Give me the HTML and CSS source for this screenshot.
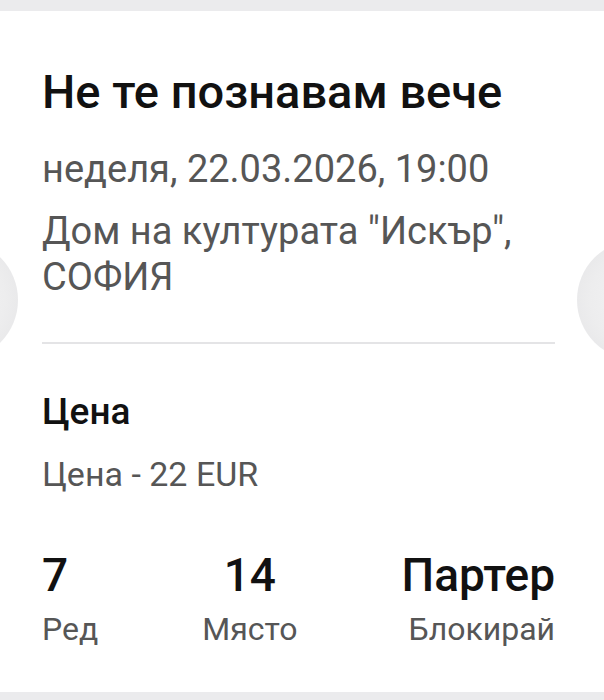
FILE: index.html
```html
<!DOCTYPE html>
<html lang="bg">
<head><meta charset="utf-8"><title>Билет</title><link rel="stylesheet" href="styles.css"></head>
<body>
<main class="page">
  <section class="ticket">
    <span class="notch notch-left"></span>
    <span class="notch notch-right"></span>
    <div class="ticket-head">
      <h1 class="title">Не те познавам вече</h1>
      <p class="meta date">неделя, 22.03.2026, 19:00</p>
      <p class="meta venue">Дом на културата "Искър", СОФИЯ</p>
    </div>
    <hr class="divider">
    <div class="price">
      <h2 class="price-title">Цена</h2>
      <p class="price-text">Цена - 22 EUR</p>
    </div>
    <div class="seats">
      <div class="seat seat-start">
        <span class="seat-value">7</span>
        <span class="seat-label">Ред</span>
      </div>
      <div class="seat seat-center">
        <span class="seat-value">14</span>
        <span class="seat-label">Място</span>
      </div>
      <div class="seat seat-end">
        <span class="seat-value">Партер</span>
        <span class="seat-label">Блокирай</span>
      </div>
    </div>
  </section>
</main>
</body>
</html>
```
FILE: styles.css
```css
* { box-sizing: border-box; }
html, body { margin: 0; padding: 0; }
body {
  background: #ebebed;
  font-family: Roboto, "Noto Sans", sans-serif;
  color: #111111;
}
.page { padding: 11px 0 8px; }
.ticket {
  position: relative;
  background: #ffffff;
  height: 681px;
  padding: 53px 49px 0 42px;
  overflow: hidden;
}
.notch {
  position: absolute;
  top: 229px;
  width: 120px;
  height: 120px;
  border-radius: 50%;
  background: radial-gradient(circle at 50% 50%, #f3f3f4 0%, #ededee 55%, #e3e3e5 100%);
}
.notch-left { left: -102px; }
.notch-right { right: -93px; }
.ticket-head { display: flex; flex-direction: column; }
.title {
  margin: 0;
  font-size: 47px;
  line-height: 55px;
  font-weight: 500;
  color: #111111;
}
.meta {
  margin: 0;
  font-size: 38px;
  line-height: 46px;
  font-weight: 400;
  color: #565656;
}
.date { margin-top: 27px; }
.venue { margin-top: 16px; }
.divider {
  margin: 42px 0 0;
  border: 0;
  height: 2px;
  background: #e4e4e6;
}
.price { margin-top: 46px; }
.price-title {
  margin: 0;
  font-size: 37px;
  line-height: 44px;
  font-weight: 500;
  color: #111111;
}
.price-text {
  margin: 20px 0 0;
  font-size: 34px;
  line-height: 40px;
  color: #565656;
}
.seats {
  margin-top: 56px;
  display: flex;
  justify-content: space-between;
}
.seat { display: flex; flex-direction: column; gap: 10px; }
.seat-center { align-items: center; }
.seat-end { align-items: flex-end; }
.seat-value {
  font-size: 46px;
  line-height: 50px;
  font-weight: 500;
  color: #111111;
}
.seat-label {
  font-size: 32px;
  line-height: 38px;
  color: #565656;
}
```
